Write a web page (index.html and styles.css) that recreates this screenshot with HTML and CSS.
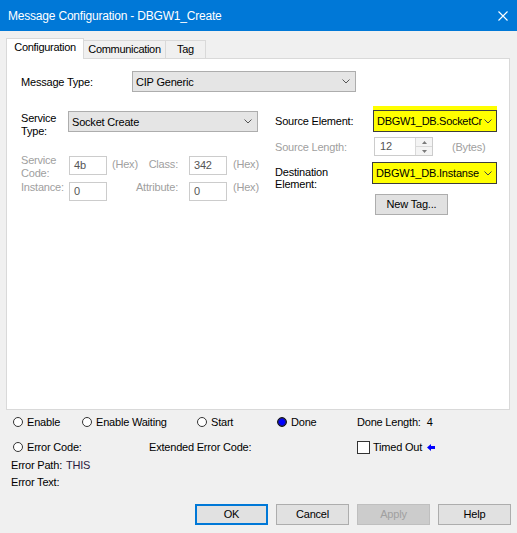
FILE: index.html
```html
<!DOCTYPE html>
<html>
<head>
<meta charset="utf-8">
<title>Message Configuration - DBGW1_Create</title>
<link rel="stylesheet" href="styles.css">
</head>
<body>
<div class="window">
  <div class="titlebar">
    <span class="title">Message Configuration - DBGW1_Create</span>
    <svg class="close" width="10" height="10" viewBox="0 0 10 10"><path d="M0.5 0.5 L9.5 9.5 M9.5 0.5 L0.5 9.5" stroke="#ffffff" stroke-width="1.1" fill="none"/></svg>
  </div>

  <div class="tabs">
    <div class="tab active">Configuration</div>
    <div class="tab">Communication</div>
    <div class="tab tab-tag">Tag</div>
  </div>

  <div class="panel">
    <div class="row-msgtype">
      <span class="lbl-msgtype">Message Type:</span>
      <div class="combo combo-msg"><span>CIP Generic</span><svg class="chev" width="8" height="5" viewBox="0 0 8 5"><path d="M0.5 0.5 L4 4 L7.5 0.5" stroke="#555" fill="none"/></svg></div>
    </div>

    <div class="cols">
      <div class="left">
        <div class="row-service">
          <span class="lbl-two">Service<br>Type:</span>
          <div class="combo combo-service"><span>Socket Create</span><svg class="chev" width="8" height="5" viewBox="0 0 8 5"><path d="M0.5 0.5 L4 4 L7.5 0.5" stroke="#555" fill="none"/></svg></div>
        </div>

        <div class="fields">
          <span class="lbl-two gray">Service<br>Code:</span>
          <div class="tbox tbox-r1">4b</div>
          <div class="mid mid-r1 gray"><span>(Hex)</span><span>Class:</span></div>
          <div class="tbox tbox-r1">342</div>
          <div class="hex hex-r1 gray">(Hex)</div>

          <span class="r2text gray">Instance:</span>
          <div class="tbox">0</div>
          <div class="mid mid-r2 r2text gray">Attribute:</div>
          <div class="tbox">0</div>
          <div class="hex r2text gray">(Hex)</div>
        </div>
      </div>

      <div class="right">
        <div class="row-src">
          <span class="lbl-src">Source Element:</span>
          <div class="combo combo-yellow combo-src"><span class="clip">DBGW1_DB.SocketCr</span><svg class="chev" width="8" height="5" viewBox="0 0 8 5"><path d="M0.5 0.5 L4 4 L7.5 0.5" stroke="#444" fill="none"/></svg></div>
        </div>
        <div class="row-len">
          <span class="lbl-len gray">Source Length:</span>
          <div class="spin">
            <span class="spin-val">12</span>
            <div class="spin-btns">
              <div class="spin-btn"><svg width="5" height="3" viewBox="0 0 5 3"><path d="M0 3 L2.5 0 L5 3 Z" fill="#7a7a7a"/></svg></div>
              <div class="spin-btn"><svg width="5" height="3" viewBox="0 0 5 3"><path d="M0 0 L2.5 3 L5 0 Z" fill="#7a7a7a"/></svg></div>
            </div>
          </div>
          <span class="bytes gray">(Bytes)</span>
        </div>
        <div class="row-dst">
          <span class="lbl-dst">Destination<br>Element:</span>
          <div class="combo combo-yellow combo-dst"><span class="clip">DBGW1_DB.Instanse</span><svg class="chev" width="8" height="5" viewBox="0 0 8 5"><path d="M0.5 0.5 L4 4 L7.5 0.5" stroke="#444" fill="none"/></svg></div>
        </div>
        <div class="btn btn-newtag">New Tag...</div>
      </div>
    </div>
  </div>

  <div class="status">
    <div class="srow srow1">
      <div class="ritem w69"><span class="radio"></span><span>Enable</span></div>
      <div class="ritem w115"><span class="radio"></span><span>Enable Waiting</span></div>
      <div class="ritem w80"><span class="radio"></span><span>Start</span></div>
      <div class="ritem w80"><span class="radio checked"></span><span>Done</span></div>
      <div class="ritem"><span>Done Length:</span><span class="donelen">4</span></div>
    </div>
    <div class="srow srow2">
      <div class="ritem w136"><span class="radio"></span><span>Error Code:</span></div>
      <div class="ritem w208"><span>Extended Error Code:</span></div>
      <div class="ritem"><span class="check"></span><span class="timed">Timed Out</span><svg class="arrow" width="8" height="7" viewBox="0 0 8 7"><path d="M0 3.5 L4 0 L4 2 L8 2 L8 5 L4 5 L4 7 Z" fill="#0000ff"/></svg></div>
    </div>
    <div class="srow srow3"><span>Error Path:</span><span class="this">THIS</span></div>
    <div class="srow srow4"><span>Error Text:</span></div>
  </div>

  <div class="buttons">
    <div class="btn btn-dlg btn-ok">OK</div>
    <div class="btn btn-dlg">Cancel</div>
    <div class="btn btn-dlg btn-disabled">Apply</div>
    <div class="btn btn-dlg">Help</div>
  </div>
</div>
</body>
</html>
```

FILE: styles.css
```css
html, body {
  margin: 0;
  padding: 0;
}
body {
  background: #f0f0f0;
  font-family: "Liberation Sans", Arial, sans-serif;
  font-size: 11px;
  letter-spacing: -0.2px;
  color: #000;
}
.window {
  width: 517px;
  height: 533px;
  overflow: hidden;
  background: #f0f0f0;
}

/* title bar */
.titlebar {
  height: 31px;
  background: #0078d7;
  color: #fff;
  display: flex;
  align-items: center;
  padding-left: 8px;
  font-size: 12px;
}
.close {
  margin-left: auto;
  margin-right: 9px;
  display: block;
}

/* tabs */
.tabs {
  display: flex;
  align-items: flex-end;
  height: 20px;
  margin-top: 7px;
  padding-left: 6px;
}
.tab {
  box-sizing: border-box;
  height: 18px;
  width: 82px;
  border: 1px solid #d9d9d9;
  border-left: none;
  border-bottom: none;
  background: #f0f0f0;
  text-align: center;
  line-height: 13px;
  padding-top: 2px;
  white-space: nowrap;
  letter-spacing: -0.3px;
}
.tab.active {
  width: 78px;
  height: 21px;
  margin-bottom: -1px;
  border-left: 1px solid #d9d9d9;
  background: #fff;
  position: relative;
  z-index: 1;
}
.tab-tag {
  width: 40px;
}

/* panel */
.panel {
  box-sizing: border-box;
  height: 352px;
  margin: 0 7px 0 6px;
  border: 1px solid #d9d9d9;
  background: #fff;
  padding: 12px 0 0 14px;
}
.row-msgtype {
  display: flex;
  align-items: center;
  height: 21px;
}
.lbl-msgtype {
  width: 111px;
}
.combo {
  box-sizing: border-box;
  display: flex;
  align-items: center;
  justify-content: space-between;
  height: 21px;
  border: 1px solid #adadad;
  background: #e5e5e5;
  padding: 0 5px 0 3px;
  white-space: nowrap;
}
.chev {
  display: block;
  flex: none;
}
.combo-msg {
  width: 224px;
}
.cols {
  display: flex;
  gap: 17px;
  margin-top: 18px;
}
.left {
  width: 237px;
  padding-top: 1px;
}
.right {
  width: 222px;
}
.row-service {
  display: flex;
  align-items: flex-start;
}
.lbl-two {
  width: 47px;
  line-height: 13px;
  padding-top: 1px;
}
.combo-service {
  width: 190px;
}
.gray {
  color: #a0a0a0;
}

.fields {
  display: grid;
  grid-template-columns: 48px 38px 82px 38px auto;
  grid-template-rows: 26px 19px;
  row-gap: 2px;
  margin-top: 16px;
}
.fields .lbl-two {
  padding-top: 0;
}
.tbox {
  box-sizing: border-box;
  height: 19px;
  border: 1px solid #cccccc;
  background: #fff;
  padding-left: 4px;
  line-height: 17px;
  color: #555;
}
.tbox-r1 {
  margin-top: 2px;
}
.mid {
  padding: 0 11px 0 5px;
}
.mid-r1 {
  display: flex;
  justify-content: space-between;
  margin-top: 5px;
  line-height: 11px;
}
.mid-r2 {
  text-align: right;
}
.hex {
  padding-left: 6px;
}
.hex-r1 {
  margin-top: 5px;
  line-height: 11px;
}
.r2text {
  line-height: 11px;
}

/* right column */
.row-src {
  display: flex;
  align-items: center;
  height: 22px;
}
.lbl-src {
  width: 98px;
}
.combo-yellow {
  background: #ffff00;
  border: 1px solid #3c3c3c;
  padding: 0 4px 0 3px;
  height: 22px;
  overflow: hidden;
}
.combo-src {
  width: 124px;
  box-shadow: 0 -4px 0 0 #ffff00;
  letter-spacing: -0.3px;
}
.clip {
  overflow: hidden;
  white-space: nowrap;
  flex: 1;
  margin-right: 2px;
}
.row-len {
  display: flex;
  align-items: center;
  height: 19px;
  margin-top: 5px;
}
.lbl-len {
  width: 99px;
}
.spin {
  box-sizing: border-box;
  width: 59px;
  height: 19px;
  border: 1px solid #cccccc;
  background: #fff;
  display: flex;
  align-items: stretch;
}
.spin-val {
  flex: 1;
  padding-left: 5px;
  line-height: 17px;
  color: #555;
}
.spin-btns {
  width: 16px;
  display: flex;
  flex-direction: column;
  border-left: 1px solid #d9d9d9;
}
.spin-btn {
  flex: 1;
  display: flex;
  align-items: center;
  justify-content: center;
  background: #f4f4f4;
}
.spin-btn + .spin-btn {
  border-top: 1px solid #d9d9d9;
}
.spin-btn svg {
  display: block;
}
.bytes {
  margin-left: 19px;
}
.row-dst {
  display: flex;
  align-items: flex-start;
  margin-top: 6px;
}
.lbl-dst {
  width: 97px;
  line-height: 12px;
  padding-top: 4px;
}
.combo-dst {
  width: 125px;
}
.btn {
  box-sizing: border-box;
  height: 21px;
  border: 1px solid #adadad;
  background: #e1e1e1;
  text-align: center;
  line-height: 19px;
}
.btn-newtag {
  width: 73px;
  margin-top: 4px;
  margin-left: 100px;
}

/* status area */
.status {
  padding: 5px 0 0 11px;
}
.srow {
  display: flex;
  align-items: center;
  height: 14px;
  line-height: 14px;
}
.srow1, .srow2 {
  padding-left: 2px;
}
.srow2 {
  margin-top: 11px;
}
.srow3 {
  margin-top: 4px;
}
.srow4 {
  margin-top: 3px;
}
.ritem {
  display: flex;
  align-items: center;
  flex: none;
}
.w69 { width: 69px; }
.w115 { width: 115px; }
.w80 { width: 80px; }
.w136 { width: 136px; }
.w208 { width: 208px; }
.radio {
  box-sizing: border-box;
  width: 10px;
  height: 10px;
  border: 1px solid #333;
  border-radius: 50%;
  background: #fff;
  margin-right: 4px;
  flex: none;
}
.radio.checked {
  border: 1.5px solid #111;
  background: radial-gradient(circle, #0000ff 0 2.6px, #1a1a8a 3.2px);
}
.donelen {
  margin-left: 6px;
}
.check {
  box-sizing: border-box;
  width: 13px;
  height: 13px;
  border: 1px solid #333;
  background: #fff;
  margin-right: 3px;
  flex: none;
}
.arrow {
  display: block;
  margin-left: 5px;
}
.this {
  margin-left: 4px;
  color: #2a1a40;
}

/* dialog buttons */
.buttons {
  display: flex;
  justify-content: flex-end;
  gap: 8px;
  padding-right: 6px;
  margin-top: 15px;
}
.btn-dlg {
  width: 73px;
}
.btn-ok {
  border: 2px solid #0078d7;
  line-height: 17px;
}
.btn-disabled {
  background: #cccccc;
  border-color: #bfbfbf;
  color: #a0a0a0;
}
```
